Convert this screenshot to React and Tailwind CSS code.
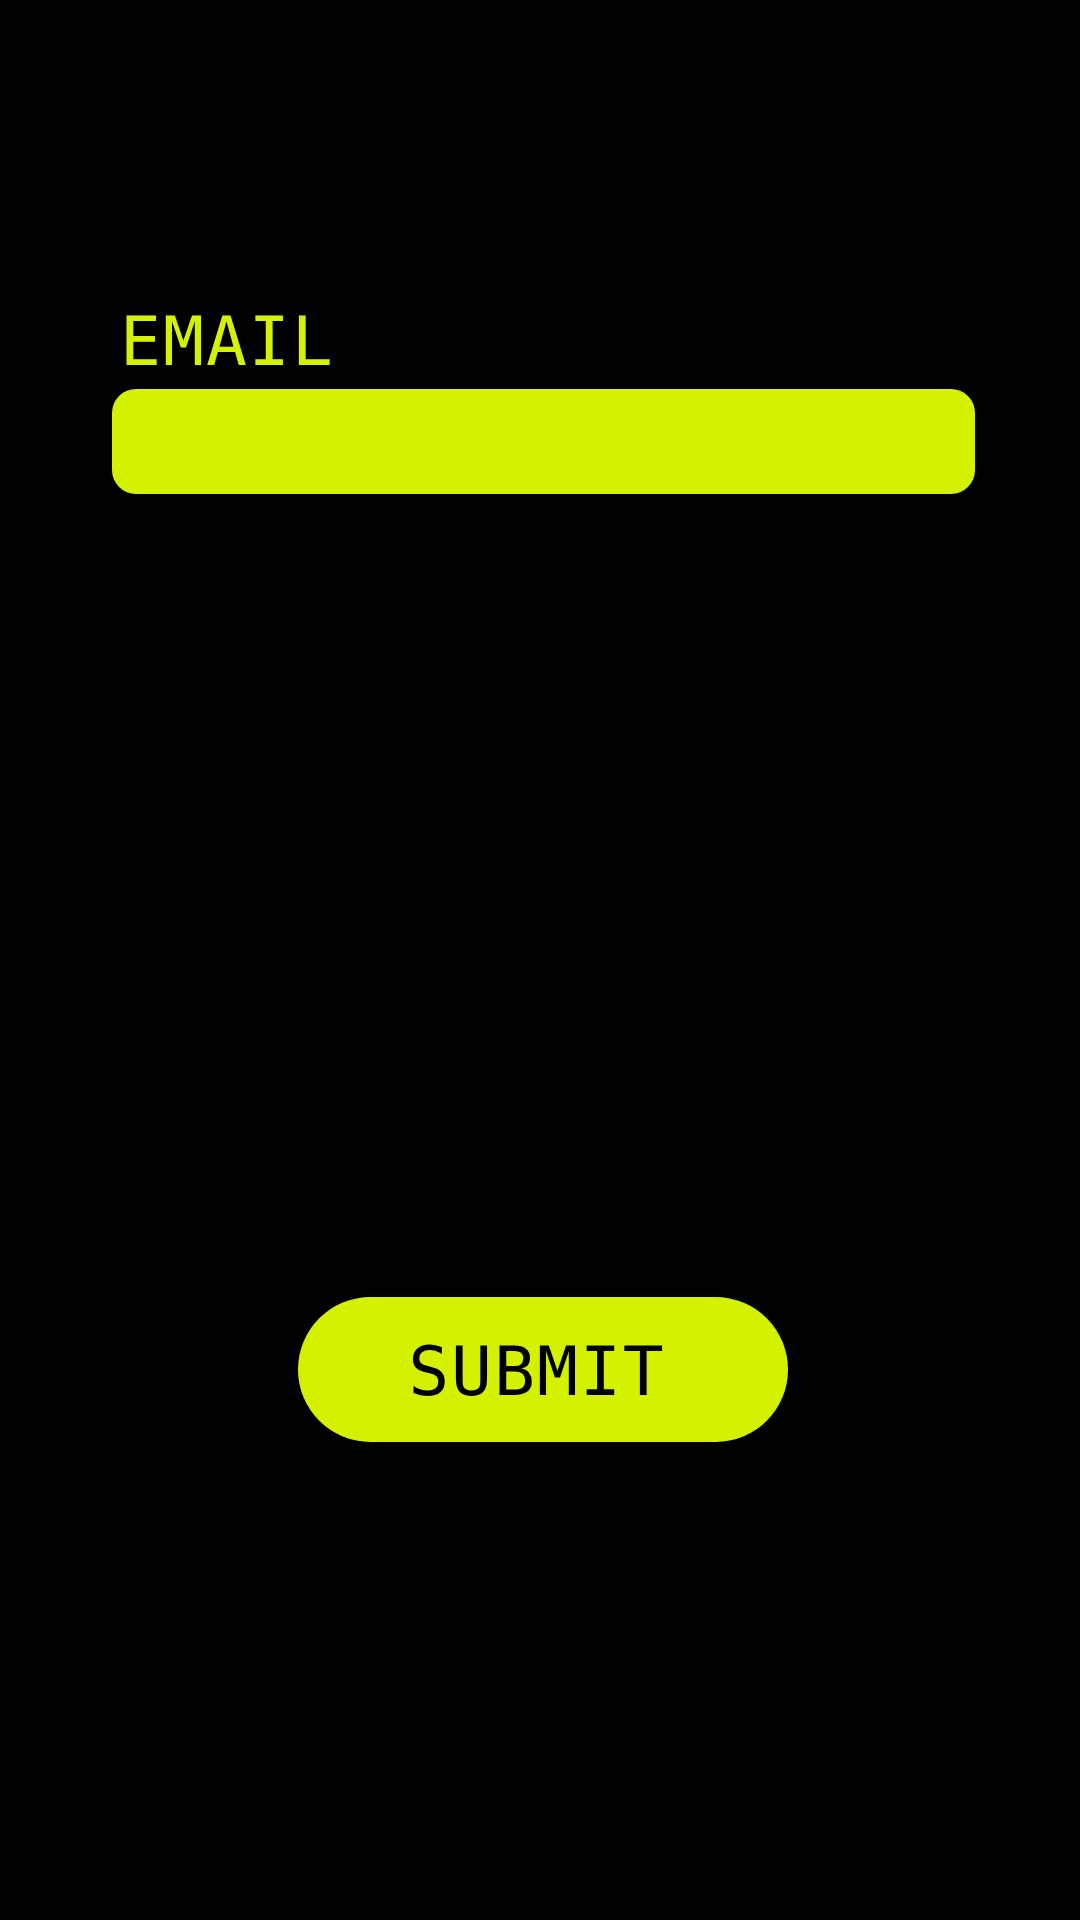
import { useState } from 'react';

export default function App() {
  const [email, setEmail] = useState('');

  return (
    <div className="min-h-[1920px] bg-black font-['DejaVu_Sans_Mono',monospace] flex flex-col">
      {/* Email field */}
      <div className="pt-[308px] pl-[112px] pr-[105px]">
        <label htmlFor="email" className="block pl-[8px] text-[68px] leading-none tracking-[2px] text-[#d4f200]">
          EMAIL
        </label>
        <input
          id="email"
          type="email"
          value={email}
          onChange={e => setEmail(e.target.value)}
          className="mt-[13px] block w-full h-[105px] rounded-[24px] bg-[#d4f200] px-6 text-[40px] text-black outline-none"
        />
      </div>

      <div className="flex justify-center pl-[6px] mt-[803px]">
        <button className="w-[490px] h-[145px] rounded-full bg-[#d4f200] pt-[5px] pr-[12px] text-black text-[68px] leading-none tracking-[2px]">
          SUBMIT
        </button>
      </div>
    </div>
  );
}
